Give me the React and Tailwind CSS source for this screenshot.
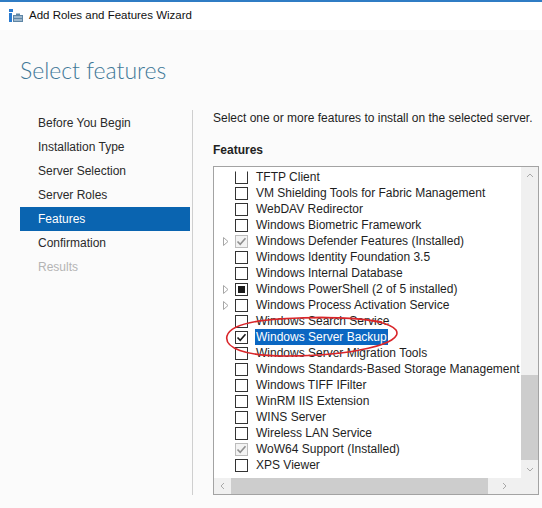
import React from 'react';

const navItems = [
  { label: 'Before You Begin' },
  { label: 'Installation Type' },
  { label: 'Server Selection' },
  { label: 'Server Roles' },
  { label: 'Features', active: true },
  { label: 'Confirmation' },
  { label: 'Results', disabled: true },
];

// state: 'off' | 'on' | 'installed' | 'partial'
const features = [
  { label: 'TFTP Client', state: 'off', clipped: true },
  { label: 'VM Shielding Tools for Fabric Management', state: 'off' },
  { label: 'WebDAV Redirector', state: 'off' },
  { label: 'Windows Biometric Framework', state: 'off' },
  { label: 'Windows Defender Features (Installed)', state: 'installed', expand: true },
  { label: 'Windows Identity Foundation 3.5', state: 'off' },
  { label: 'Windows Internal Database', state: 'off' },
  { label: 'Windows PowerShell (2 of 5 installed)', state: 'partial', expand: true },
  { label: 'Windows Process Activation Service', state: 'off', expand: true },
  { label: 'Windows Search Service', state: 'off' },
  { label: 'Windows Server Backup', state: 'on', selected: true },
  { label: 'Windows Server Migration Tools', state: 'off' },
  { label: 'Windows Standards-Based Storage Management', state: 'off' },
  { label: 'Windows TIFF IFilter', state: 'off' },
  { label: 'WinRM IIS Extension', state: 'off' },
  { label: 'WINS Server', state: 'off' },
  { label: 'Wireless LAN Service', state: 'off' },
  { label: 'WoW64 Support (Installed)', state: 'installed' },
  { label: 'XPS Viewer', state: 'off' },
];

function WizardIcon() {
  return (
    <svg width="16" height="16" viewBox="0 0 16 16" className="shrink-0">
      <rect x="1" y="1" width="4" height="3" fill="#2a7bd0" />
      <rect x="1" y="5" width="3" height="9" fill="#2a7bd0" />
      <rect x="5" y="7" width="10" height="7" fill="#5e86a6" />
      <rect x="6" y="8" width="8" height="5" fill="#9fb8cc" />
      <rect x="8" y="5.5" width="4" height="1.5" fill="#5e86a6" />
      <rect x="5" y="10" width="10" height="1" fill="#5e86a6" />
    </svg>
  );
}

function Expander() {
  return (
    <svg width="6" height="9" viewBox="0 0 6 9">
      <path d="M0.5 0.5 L5 4.5 L0.5 8.5 Z" fill="none" stroke="#a6a6a6" strokeWidth="1" />
    </svg>
  );
}

function Checkbox({ state, clipped }) {
  const muted = state === 'installed';
  return (
    <div
      className={`w-[13px] h-[13px] shrink-0 border flex items-center justify-center ${
        muted ? 'border-[#bcbcbc] bg-[#f3f3f3]' : 'border-[#333333] bg-white'
      } ${clipped ? 'border-t-transparent' : ''}`}
    >
      {(state === 'on' || state === 'installed') && (
        <svg width="11" height="11" viewBox="0 0 11 11">
          <path
            d="M1.5 5.5 L4.2 8.3 L9.5 2.2"
            fill="none"
            stroke={muted ? '#8f8f8f' : '#1a1a1a'}
            strokeWidth="1.6"
          />
        </svg>
      )}
      {state === 'partial' && <div className="w-[7px] h-[7px] bg-[#1a1a1a]" />}
    </div>
  );
}

function FeatureRow({ item }) {
  return (
    <div className="h-[16px] flex items-center whitespace-nowrap">
      <div className="w-[21px] shrink-0 pl-[9px] flex items-center">
        {item.expand && <Expander />}
      </div>
      <Checkbox state={item.state} clipped={item.clipped} />
      <span
        className={`ml-[7px] px-px leading-[16px] ${
          item.selected ? 'bg-[#0b67c2] text-white' : 'text-[#1e1e1e]'
        }`}
      >
        {item.label}
      </span>
    </div>
  );
}

function Chevron({ dir }) {
  const paths = {
    up: 'M1 5 L4 2 L7 5',
    down: 'M1 2 L4 5 L7 2',
    left: 'M5 1 L2 4 L5 7',
    right: 'M2 1 L5 4 L2 7',
  };
  return (
    <svg width="8" height="8" viewBox="0 0 8 8">
      <path d={paths[dir]} fill="none" stroke="#a8a8a8" strokeWidth="1" />
    </svg>
  );
}

export default function App() {
  return (
    <div
      className="relative w-[542px] h-[508px] bg-[#fbfbfb] overflow-hidden flex flex-col text-[12px] text-[#1e1e1e]"
      style={{ fontFamily: '"Segoe UI", "Liberation Sans", Arial, sans-serif' }}
    >
      {/* title bar */}
      <div className="h-[30px] shrink-0 bg-white border-t-2 border-[#2f7cc4] flex items-center pl-[8px] gap-[5px]">
        <WizardIcon />
        <span className="text-[11.5px] text-[#111]">Add Roles and Features Wizard</span>
      </div>

      <h1
        className="mt-[24px] ml-[20px] h-[32px] leading-[32px] text-[23px] font-light text-[#3f7898]"
        style={{ fontFamily: 'Lato, "Open Sans", sans-serif' }}
      >
        Select features
      </h1>

      <div className="mt-[24px] flex flex-1 pb-[13px]">
        {/* navigation */}
        <div className="ml-[20px] w-[173px] pt-[1px] pr-[2px] border-r border-[#cfcfcf] flex flex-col">
          {navItems.map((n) => (
            <div
              key={n.label}
              className={`h-[24px] leading-[24px] pl-[18px] ${
                n.active ? 'bg-[#0a64b0] text-white' : n.disabled ? 'text-[#b4b4b4]' : 'text-[#2a2a2a]'
              }`}
            >
              {n.label}
            </div>
          ))}
        </div>

        {/* content */}
        <div className="pl-[20px] flex flex-col">
          <div className="h-[16px] leading-[16px]">
            Select one or more features to install on the selected server.
          </div>
          <div className="mt-[16px] h-[16px] leading-[16px] font-semibold text-[#222]">Features</div>

          <div className="mt-[8px] w-[326px] h-[329px] border border-[#a3a3a3] bg-white grid grid-cols-[307px_17px] grid-rows-[311px_16px]">
            <div className="overflow-hidden pt-[2px]">
              {features.map((f) => (
                <FeatureRow key={f.label} item={f} />
              ))}
            </div>
            {/* vertical scrollbar */}
            <div className="bg-[#f0f0f0] flex flex-col">
              <div className="h-[17px] flex items-center justify-center">
                <Chevron dir="up" />
              </div>
              <div className="flex-1 flex flex-col pt-[191px]">
                <div className="h-[85px] bg-[#cdcdcd]" />
              </div>
              <div className="h-[17px] flex items-center justify-center">
                <Chevron dir="down" />
              </div>
            </div>
            {/* horizontal scrollbar */}
            <div className="bg-[#f0f0f0] flex items-stretch">
              <div className="w-[17px] flex items-center justify-center">
                <Chevron dir="left" />
              </div>
              <div className="w-[257px] bg-[#cdcdcd]" />
              <div className="flex-1 flex items-center justify-center">
                <Chevron dir="right" />
              </div>
            </div>
            <div className="bg-[#f0f0f0]" />
          </div>
        </div>
      </div>

      {/* red annotation */}
      <svg className="absolute left-0 top-0 pointer-events-none" width="542" height="508">
        <path
          d="M258 321 C310 315 385 316 396 330 C405 344 350 356 285 356 C245 356 224 348 227 336 C230 325 255 319 300 318 C330 317 360 318 382 322"
          fill="none"
          stroke="#d9262a"
          strokeWidth="1.6"
        />
      </svg>
    </div>
  );
}
